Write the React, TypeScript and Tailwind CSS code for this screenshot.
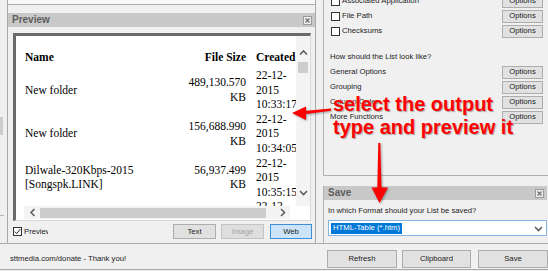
const ROWS = [
  { name: ['New folder'], size: ['489,130.570', 'KB'], created: ['22-12-', '2015', '10:33:17'] },
  { name: ['New folder'], size: ['156,688.990', 'KB'], created: ['22-12-', '2015', '10:34:05'] },
  { name: ['Dilwale-320Kbps-2015', '[Songspk.LINK]'], size: ['56,937.499', 'KB'], created: ['22-12-', '2015', '10:35:15'] },
  { name: ['New folder'], size: ['1,204.003', 'KB'], created: ['22-12-', '2015', '10:36:02'] },
]

const OPTION_ROWS = ['General Options', 'Grouping', 'Column Order', 'More Functions']

function Chevron({ dir }: { dir: 'up' | 'down' | 'left' | 'right' }) {
  const vertical = dir === 'up' || dir === 'down'
  const d = {
    up: 'M1 5.5 L4.5 2 L8 5.5',
    down: 'M1 2 L4.5 5.5 L8 2',
    left: 'M5.5 1 L2 4.5 L5.5 8',
    right: 'M2 1 L5.5 4.5 L2 8',
  }[dir]
  return (
    <svg width={vertical ? 9 : 7} height={vertical ? 7 : 9} viewBox={vertical ? '0 0 9 7' : '0 0 7 9'}>
      <path d={d} fill="none" stroke="#5f5f5f" strokeWidth="1.6" />
    </svg>
  )
}

function CloseBox() {
  return (
    <svg width="9" height="9" viewBox="0 0 9 9">
      <rect x="0.5" y="0.5" width="8" height="8" fill="#ececec" stroke="#9a9a9a" />
      <path d="M2.5 2.5 L6.5 6.5 M6.5 2.5 L2.5 6.5" stroke="#6f6f6f" strokeWidth="1.2" />
    </svg>
  )
}

function Box({ checked = false }: { checked?: boolean }) {
  return (
    <div className="w-[9px] h-[9px] border border-[#333] bg-white flex items-center justify-center shrink-0">
      {checked && (
        <svg width="7" height="7" viewBox="0 0 7 7">
          <path d="M0.8 3.6 L2.7 5.6 L6.3 1" fill="none" stroke="#222" strokeWidth="1" />
        </svg>
      )}
    </div>
  )
}

function OptBtn() {
  return (
    <div className="w-[41px] h-[13px] border border-[#adadad] bg-[#e1e1e1] flex items-center justify-center leading-none">
      Options
    </div>
  )
}

function Header({ title }: { title: string }) {
  return (
    <div className="h-[14px] bg-[#c8c8c8] flex items-center justify-between pl-[4px] pr-[3px]">
      <span className="text-[10px] font-bold text-[#5e5e5e] leading-none">{title}</span>
      <CloseBox />
    </div>
  )
}

export default function App() {
  return (
    <div className="relative w-[548px] h-[271px] overflow-hidden bg-[#f0f0f0] font-['Liberation_Sans',Arial,sans-serif] text-[7.7px] text-[#1b1b1b]">
      <div className="flex h-[243px]">
        {/* left edge */}
        <div className="w-[7px] flex flex-col">
          <div className="mt-[117px] h-[18px] w-[3px] bg-[#cdcdcd]" />
          <div className="mt-[80px] h-px w-[4px] bg-[#b5b5b5]" />
        </div>

        {/* preview side */}
        <div className="w-[309px] border-l border-r border-[#a9a9a9] flex flex-col">
          <div className="h-[5px] bg-[#f8f8f8] border-b border-[#b0b0b0]" />
          <div className="h-[8px]" />
          <Header title="Preview" />
          <div className="flex-1 pl-[5px] pr-[3px] pt-[6px]">
            <div className="w-[298px] h-[188px] border-l-[3px] border-t-[3px] border-[#6a6a6a] border-r border-b border-r-[#d8d8d8] border-b-[#d8d8d8] bg-white flex flex-col">
              <div className="h-[170px] flex">
                <div className="w-[280px] overflow-hidden pl-[9px] pt-[14px] font-['Liberation_Serif','Times_New_Roman',serif] text-[11.5px] leading-[14.6px] text-black">
                  <div className="grid grid-cols-[145px_76px_49px] font-bold mb-[3.4px]">
                    <span>Name</span>
                    <span className="text-right">File Size</span>
                    <span className="pl-[10px] whitespace-nowrap">Created</span>
                  </div>
                  {ROWS.map((r, i) => (
                    <div key={i} className="grid grid-cols-[145px_76px_49px] items-center">
                      <div className="flex flex-col whitespace-nowrap">
                        {r.name.map((t) => <span key={t}>{t}</span>)}
                      </div>
                      <div className="flex flex-col items-end">
                        {r.size.map((t) => <span key={t}>{t}</span>)}
                      </div>
                      <div className="flex flex-col pl-[10px] whitespace-nowrap">
                        {r.created.map((t) => <span key={t}>{t}</span>)}
                      </div>
                    </div>
                  ))}
                </div>
                <div className="w-[14px] bg-[#f4f4f4] flex flex-col items-center pt-[8px] pb-[6px]">
                  <div className="h-[16px] flex items-center"><Chevron dir="up" /></div>
                  <div className="mt-[2px] h-[11px] w-[10px] bg-[#cdcdcd]" />
                  <div className="flex-1" />
                  <div className="h-[16px] flex items-center"><Chevron dir="down" /></div>
                </div>
              </div>
              <div className="h-[13px] flex ml-[8px] w-[266px] bg-[#f4f4f4] items-center">
                <div className="w-[16px] flex justify-center"><Chevron dir="left" /></div>
                <div className="w-[226px] h-[10px] bg-[#cdcdcd]" />
                <div className="flex-1" />
                <div className="w-[16px] flex justify-center"><Chevron dir="right" /></div>
              </div>
            </div>
            <div className="mt-[3px] h-[15px] flex items-center">
              <Box checked />
              <span className="ml-[2px] w-[24px] overflow-hidden whitespace-nowrap leading-[10px]">Preview</span>
              <div className="ml-auto flex">
                <div className="w-[43px] h-[15px] border border-[#adadad] bg-[#e1e1e1] flex items-center justify-center leading-none">Text</div>
                <div className="ml-[5px] w-[43px] h-[15px] border border-[#c4c4c4] bg-[#dedede] text-[#a3a3a3] flex items-center justify-center leading-none">Image</div>
                <div className="ml-[6px] w-[42px] h-[15px] border border-[#3d8ed6] bg-[#cce4f7] flex items-center justify-center leading-none">Web</div>
              </div>
            </div>
          </div>
        </div>

        <div className="w-[7px]" />

        {/* options side */}
        <div className="w-[225px] flex flex-col">
          <div className="h-[176px] overflow-hidden border-l border-b border-[#b0b0b0] pl-[7px] pr-[5px]">
            <div className="-mt-[6.5px]">
              {['Associated Application', 'File Path', 'Checksums'].map((t) => (
                <div key={t} className="h-[15px] flex items-center">
                  <Box />
                  <span className="ml-[2px] leading-none">{t}</span>
                  <div className="ml-auto"><OptBtn /></div>
                </div>
              ))}
              <div className="mt-[11px] h-[15px] flex items-center -ml-px leading-none">How should the List look like?</div>
              {OPTION_ROWS.map((t) => (
                <div key={t} className="h-[15px] flex items-center">
                  <span className="-ml-px leading-none">{t}</span>
                  <div className="ml-auto"><OptBtn /></div>
                </div>
              ))}
            </div>
          </div>
          <div className="mt-[10px] flex-1 border-l border-[#b0b0b0] flex flex-col">
            <div className="pr-[1px]"><Header title="Save" /></div>
            <div className="pl-[4px]">
              <div className="mt-[5px] h-[11px] flex items-center leading-none">In which Format should your List be saved?</div>
              <div className="mt-[4px] w-[219px] h-[16px] border border-[#86b5e2] bg-white flex items-center pl-[2px] pr-[3px]">
                <span className="h-[11px] px-[2px] bg-[#0078d7] text-white flex items-center leading-none">HTML-Table (*.htm)</span>
                <span className="ml-auto"><Chevron dir="down" /></span>
              </div>
            </div>
          </div>
        </div>
      </div>

      {/* bottom bar */}
      <div className="h-[27px] border-t border-b border-[#a9a9a9] flex">
        <div className="w-[327px] pl-[10px] pt-[8.5px] leading-[11px]">sttmedia.com/donate - Thank you!</div>
        <div className="flex pt-[6px]">
          <div className="w-[70px] h-[18px] border border-[#adadad] bg-[#e1e1e1] flex items-center justify-center leading-none">Refresh</div>
          <div className="ml-[5px] w-[69px] h-[18px] border border-[#adadad] bg-[#e1e1e1] flex items-center justify-center leading-none">Clipboard</div>
          <div className="ml-[7px] w-[70px] h-[18px] border border-[#adadad] bg-[#e1e1e1] flex items-center justify-center leading-none">Save</div>
        </div>
      </div>

      {/* annotation */}
      <div className="absolute left-[333px] top-[93px] text-[20px] leading-[23px] font-bold text-[#ff0000] whitespace-nowrap [text-shadow:1px_1px_1px_rgba(0,0,0,0.35),0_0_2px_rgba(255,255,255,0.9)]">
        <div>select the output</div>
        <div>type and preview it</div>
      </div>
      <svg className="absolute left-0 top-0 pointer-events-none drop-shadow-[1px_1px_1px_rgba(0,0,0,0.35)]" width="548" height="271" viewBox="0 0 548 271">
        <polygon points="304,111 331,108.5 331,110.8 304,114.2" fill="#f00" />
        <polygon points="292,113 306,106.5 306,120" fill="#f00" />
        <polygon points="378.3,143 380.3,143 381.5,189 377.3,189" fill="#f00" />
        <polygon points="371.5,187.5 388,187.5 379.5,203" fill="#f00" />
      </svg>
    </div>
  )
}
